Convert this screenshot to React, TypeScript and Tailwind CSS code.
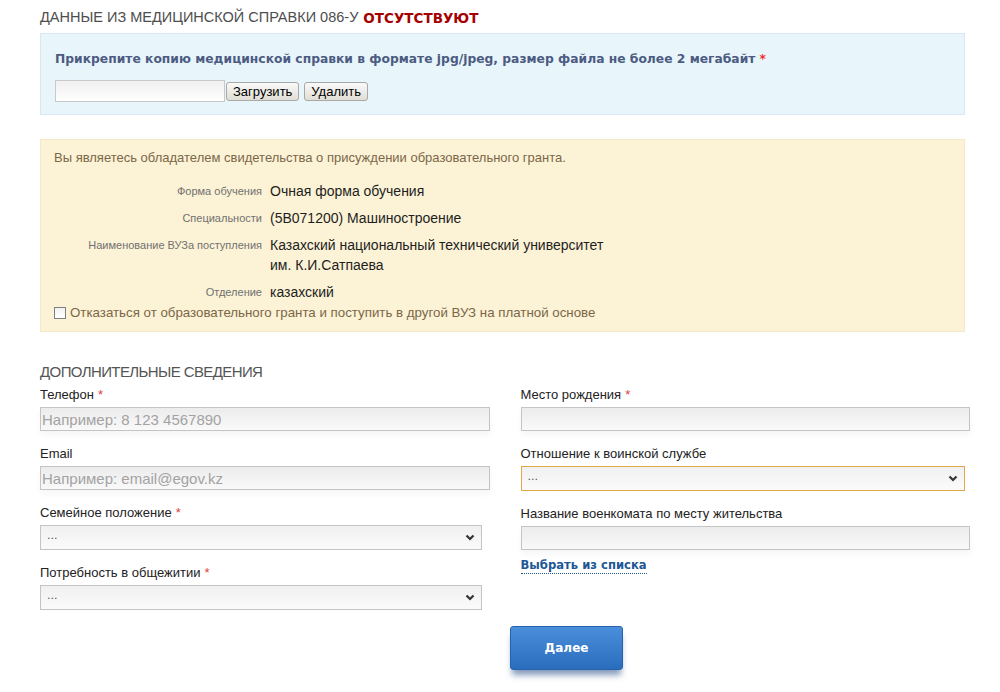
const sans = "font-['Liberation_Sans',Arial,sans-serif]";
const verdana = "font-['DejaVu_Sans',Verdana,sans-serif]";

function Req() {
  return <span className="text-[#e0403a] ml-1">*</span>;
}

function TextInput({ placeholder, width = "w-full" }: { placeholder?: string; width?: string }) {
  return (
    <div
      className={`${width} h-[24px] border border-[#c4c4c4] bg-gradient-to-b from-[#ececec] to-[#f9f9f9] shadow-[0_4px_6px_rgba(0,0,0,0.04)] flex items-center px-[1px] ${sans} text-[15px] text-[#a3a3a3] leading-none`}
    >
      {placeholder}
    </div>
  );
}

function Select({ width = "w-full", focused = false }: { width?: string; focused?: boolean }) {
  return (
    <div
      className={`${width} h-[25px] border ${
        focused ? "border-[#e0a848]" : "border-[#c4c4c4]"
      } bg-gradient-to-b from-[#f0f0f0] to-[#fbfbfb] flex items-center justify-between pl-[6px] pr-[6px] ${verdana} text-[11px] text-[#555]`}
    >
      <span className="-mt-[2px]">...</span>
      <svg width="10" height="7" viewBox="0 0 10 7">
        <path d="M1.5 1.5 L5 5 L8.5 1.5" fill="none" stroke="#333" strokeWidth="2.2" />
      </svg>
    </div>
  );
}

function Field({ label, required, children }: { label: string; required?: boolean; children: React.ReactNode }) {
  return (
    <div className="mb-[13px]">
      <div className={`h-5 flex items-center ${sans} text-[13px] text-[#222]`}>
        {label}
        {required && <Req />}
      </div>
      <div className="mt-[2px]">{children}</div>
    </div>
  );
}

const GRANT_ROWS = [
  { label: "Форма обучения", value: ["Очная форма обучения"] },
  { label: "Специальности", value: ["(5В071200) Машиностроение"] },
  {
    label: "Наименование ВУЗа поступления",
    value: ["Казахский национальный технический университет", "им. К.И.Сатпаева"],
  },
  { label: "Отделение", value: ["казахский"] },
];

export default function App() {
  return (
    <div className="w-[1000px] h-[692px] bg-white overflow-hidden">
      <div className="pl-[40px] w-[970px]">
        {/* medical certificate */}
        <div className={`h-[20px] mt-[8px] flex items-center ${sans} text-[14.5px] text-[#4e4e4e]`}>
          ДАННЫЕ ИЗ МЕДИЦИНСКОЙ СПРАВКИ 086-У
          <span className={`ml-[5px] ${verdana} font-bold text-[13.5px] text-[#a40000]`}>ОТСУТСТВУЮТ</span>
        </div>
        <div className="mt-[5px] w-[925px] h-[82px] border border-[#d8e6f6] bg-[#e8f6fb] px-[14px] pt-[15px]">
          <div className={`${verdana} font-bold text-[12.3px] text-[#4c5b82] leading-[20px]`}>
            Прикрепите копию медицинской справки в формате jpg/jpeg, размер файла не более 2 мегабайт
            <span className="text-[#f03030] ml-1">*</span>
          </div>
          <div className="flex items-center mt-[11px]">
            <div className="w-[170px] h-[22px] border border-[#c9c9c9] bg-gradient-to-b from-[#f0f0f0] to-white" />
            <button
              className={`ml-[1px] h-[19px] px-[6px] rounded-[3px] border border-[#a8a8a8] bg-gradient-to-b from-[#fafafa] to-[#e0ddd4] ${sans} text-[13px] text-black leading-none`}
            >
              Загрузить
            </button>
            <button
              className={`ml-[5px] h-[19px] px-[6px] rounded-[3px] border border-[#a8a8a8] bg-gradient-to-b from-[#fafafa] to-[#e0ddd4] ${sans} text-[13px] text-black leading-none`}
            >
              Удалить
            </button>
          </div>
        </div>

        {/* grant info */}
        <div className="mt-[24px] w-[925px] h-[193px] border border-[#f6e8c6] bg-[#fcf3d6] px-[13px] pt-[8px]">
          <div className={`${sans} text-[13px] text-[#7b6748] leading-[20px]`}>
            Вы являетесь обладателем свидетельства о присуждении образовательного гранта.
          </div>
          <div className="mt-[13px]">
            {GRANT_ROWS.map((row) => (
              <div key={row.label} className="flex mb-[7px]">
                <div className={`w-[216px] shrink-0 text-right pr-[8px] ${sans} text-[11px] text-[#707070] leading-[20px]`}>
                  {row.label}
                </div>
                <div className={`${sans} text-[14px] text-[#1e1e1e] leading-[20px]`}>
                  {row.value.map((v) => (
                    <div key={v}>{v}</div>
                  ))}
                </div>
              </div>
            ))}
          </div>
          <label className={`-mt-[6px] flex items-center ${sans} text-[13.3px] text-[#7b6748] leading-[20px]`}>
            <span className="w-[12px] h-[12px] border border-[#7f7f7f] bg-gradient-to-b from-[#f2f2f2] to-white mr-[4px]" />
            Отказаться от образовательного гранта и поступить в другой ВУЗ на платной основе
          </label>
        </div>

        {/* additional info */}
        <div className={`mt-[30px] h-5 flex items-center ${sans} text-[15px] tracking-[-0.6px] text-[#555]`}>
          ДОПОЛНИТЕЛЬНЫЕ СВЕДЕНИЯ
        </div>
        <div className="grid grid-cols-2 gap-x-[31px] mt-[3px]">
          <div>
            <Field label="Телефон" required>
              <TextInput placeholder="Например: 8 123 4567890" />
            </Field>
            <Field label="Email">
              <TextInput placeholder="Например: email@egov.kz" />
            </Field>
            <Field label="Семейное положение" required>
              <Select width="w-[442px]" />
            </Field>
            <Field label="Потребность в общежитии" required>
              <Select width="w-[442px]" />
            </Field>
          </div>
          <div>
            <Field label="Место рождения" required>
              <TextInput />
            </Field>
            <Field label="Отношение к воинской службе">
              <Select width="w-[444px]" focused />
            </Field>
            <Field label="Название военкомата по месту жительства">
              <TextInput />
            </Field>
            <a
              className={`-mt-[6px] block w-fit ${verdana} font-bold text-[11.6px] text-[#1d5795] border-b border-dotted border-[#1d5795] leading-[16px]`}
            >
              Выбрать из списка
            </a>
          </div>
        </div>

        <div className="mt-[3px] pl-[470px]">
          <button
            className={`w-[113px] h-[44px] rounded-[3px] bg-gradient-to-b from-[#4a8fdb] to-[#2a6dbd] border border-[#2763ad] shadow-[0_7px_6px_-2px_rgba(30,70,130,0.55)] ${verdana} font-bold text-[12px] text-white`}
          >
            Далее
          </button>
        </div>
      </div>
    </div>
  );
}
